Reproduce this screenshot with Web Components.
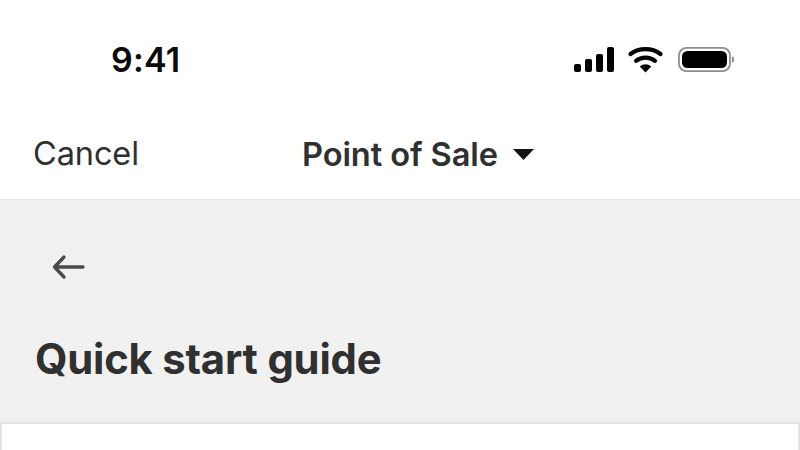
<!DOCTYPE html>
<html><head><meta charset="utf-8"><style>
html,body{margin:0;padding:0;width:800px;height:450px;overflow:hidden;background:#fff;font-family:Inter,"Liberation Sans",sans-serif}
</style></head><body>
<app-screen>
<status-bar time="9:41"></status-bar>
<nav-bar cancel="Cancel" title="Point of Sale"></nav-bar>
<guide-panel title="Quick start guide"></guide-panel>
</app-screen>
<script>
function def(name,html){customElements.define(name,class extends HTMLElement{connectedCallback(){if(this.shadowRoot)return;const r=this.attachShadow({mode:'open'});r.innerHTML=typeof html==='function'?html(this):html;}});}
def('app-screen',`<style>:host{display:flex;flex-direction:column;width:800px;height:450px;overflow:hidden}</style><slot></slot>`);
def('status-bar',e=>`<style>
:host{display:flex;align-items:center;justify-content:space-between;height:120px;box-sizing:border-box;padding:0 66px 0 111px;flex:none}
.t{font:600 34px/1 Inter,"Liberation Sans",sans-serif;color:#0a0a0a;letter-spacing:.2px}
svg{display:block}
</style><span class="t">${e.getAttribute('time')}</span>
<svg width="160" height="30" viewBox="0 0 160 30" fill="#000">
<rect x="0" y="19" width="7" height="8" rx="2"/><rect x="11" y="14" width="7" height="13" rx="2"/><rect x="22" y="9" width="7" height="18" rx="2"/><rect x="33" y="2" width="7" height="25" rx="2"/>
<path d="M56.500 9C65 2.500 78 2.500 86.500 9" fill="none" stroke="#000" stroke-width="4.200" stroke-linecap="round"/>
<path d="M62 15.800C67.500 11.600 75.500 11.600 81 15.800" fill="none" stroke="#000" stroke-width="4.200" stroke-linecap="round"/>
<path d="M65.800 21.600C69.500 18.400 73.500 18.400 77.200 21.600L71.500 27.500Z"/>
<rect x="105" y="2.800" width="51" height="23.400" rx="7.500" fill="none" stroke="#8f8f8f" stroke-width="1.800"/>
<rect x="108" y="6" width="45" height="17" rx="5.500"/>
<path d="M158 11.500c1.800.5 2.500 1.700 2.500 3s-.7 2.500-2.500 3z" fill="#8a8a8a"/>
</svg>`);
def('nav-bar',e=>`<style>
:host{display:flex;align-items:center;height:80px;box-sizing:border-box;padding:0 0 10px 33px;border-bottom:1px solid #e6e6e6;flex:none;color:#303030}
.c{font:400 32.500px/1 Inter,"Liberation Sans",sans-serif;width:269px;letter-spacing:-.1px}
.p{font:600 32.600px/1 Inter,"Liberation Sans",sans-serif;letter-spacing:-.1px}
.r{display:flex;align-items:center;gap:15px}
svg{display:block}
</style><span class="c">${e.getAttribute('cancel')}</span><span class="r"><span class="p">${e.getAttribute('title')}</span>
<svg width="21" height="11" viewBox="0 0 21 11"><path d="M0 0H21L10.500 11Z" fill="#111"/></svg></span>`);
def('guide-panel',e=>`<style>
:host{display:flex;flex-direction:column;flex:1;background:#f1f1f1;min-height:0;color:#303030}
.b{padding:54px 0 0 51px;height:26px;flex:none}
h1{margin:54px 0 0;padding:0 0 0 35px;font:700 41.800px/50px Inter,"Liberation Sans",sans-serif;letter-spacing:-.2px;height:50px;flex:none}
.card{margin-top:38px;flex:1;background:#fff;border-top:2px solid #e3e3e3;border-left:2px solid #e3e3e3;border-right:2px solid #e3e3e3;border-radius:2px 2px 0 0}
svg{display:block}
</style><div class="b"><svg width="34" height="26" viewBox="0 0 34 26" fill="none" stroke="#4a4a4a" stroke-width="3.300" stroke-linecap="round" stroke-linejoin="round"><path d="M32 13H3.500M13 3 3.500 13 13 23"/></svg></div>
<h1>${e.getAttribute('title')}</h1><div class="card"></div>`);
</script>
</body></html>
